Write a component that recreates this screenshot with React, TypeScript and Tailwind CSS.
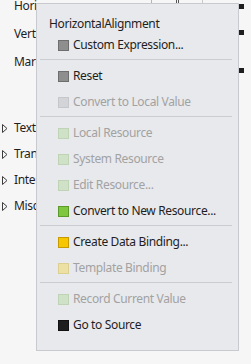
import React from "react";

type Item = {
  label: string;
  fill: string;
  border: string;
  disabled?: boolean;
};

function MenuItem({ item }: { item: Item }) {
  return (
    <div className="flex h-[26px] items-center pl-[21px]">
      <span
        className="block h-[11px] w-[11px] shrink-0 border"
        style={{ backgroundColor: item.fill, borderColor: item.border }}
      />
      <span
        className={
          "ml-[4px] whitespace-nowrap text-[12px] leading-[16px] tracking-[-0.35px] " +
          (item.disabled ? "text-[#a2a2a2]" : "text-[#1e1e1e]")
        }
      >
        {item.label}
      </span>
    </div>
  );
}

function Sep() {
  return (
    <div className="h-[5px] pt-[1px]">
      <div className="ml-[3px] mr-[6px] h-px bg-[#cbccd1]" />
    </div>
  );
}

function Tri() {
  return (
    <svg width="6" height="9" viewBox="0 0 6 9" className="shrink-0">
      <path d="M0.5 0.5 L5 4.5 L0.5 8.5 Z" fill="none" stroke="#3c3c3c" strokeWidth="1" />
    </svg>
  );
}

export default function App() {
  const gray = { fill: "#8e8e8e", border: "#6e6e6e" };
  const lgray = { fill: "#d3d4d7", border: "#c6c7ca" };
  const lgreen = { fill: "#cfe1c6", border: "#bfd3b5" };

  return (
    <div
      className="relative h-[364px] w-[251px] overflow-hidden bg-[#f6f6f6] text-[#1e1e1e]"
      style={{ fontFamily: '"Segoe UI", "Noto Sans", sans-serif' }}
    >
      {/* background property panel */}
      <div className="flex flex-col gap-[16px] pl-[14px] text-[12px] leading-[12px] tracking-[-0.35px]">
        <div className="h-[12px]">Hori</div>
        <div className="h-[12px]">Vert</div>
        <div className="h-[12px]">Marg</div>
      </div>
      <div className="mt-[47px] flex flex-col pl-[2px] text-[12px] leading-[16px] tracking-[-0.35px]">
        {["Text", "Tran", "Inter", "Misc"].map((t) => (
          <div key={t} className="flex h-[26px] items-center gap-[6px]">
            <Tri />
            <span>{t}</span>
          </div>
        ))}
      </div>

      {/* right-edge markers */}
      <div className="absolute left-[239px] top-[4px] flex flex-col">
        <div className="h-[5px] w-[5px] bg-[#1e1e1e]" />
        <div className="mt-[21px] h-[5px] w-[5px] bg-[#1e1e1e]" />
        <div className="mt-[33px] h-[5px] w-[5px] bg-[#1e1e1e]" />
      </div>
      {/* top partial control */}
      <div className="absolute left-[151px] top-0 flex h-[3px] w-[52px]">
        <div className="h-full w-px bg-[#9fb8d6]" />
        <div className="ml-[24px] h-full w-px bg-[#555]" />
        <div className="ml-[1px] h-full w-px bg-[#555]" />
        <div className="ml-[23px] h-full w-px bg-[#c8c8c8]" />
      </div>

      {/* context menu */}
      <div className="absolute left-[36px] top-[3px] h-[348px] w-[203px] border border-[#c9cad0] bg-[#e8e9ed]">
        <div className="pl-[12px] pt-[12px] text-[12px] leading-[16px] tracking-[-0.35px] text-[#1e1e1e]">
          HorizontalAlignment
        </div>
        <div>
          <MenuItem item={{ label: "Custom Expression...", ...gray }} />
          <Sep />
          <MenuItem item={{ label: "Reset", ...gray }} />
          <MenuItem item={{ label: "Convert to Local Value", ...lgray, disabled: true }} />
          <Sep />
          <MenuItem item={{ label: "Local Resource", ...lgreen, disabled: true }} />
          <MenuItem item={{ label: "System Resource", ...lgreen, disabled: true }} />
          <MenuItem item={{ label: "Edit Resource...", ...lgreen, disabled: true }} />
          <MenuItem item={{ label: "Convert to New Resource...", fill: "#7ec73e", border: "#5c9a2c" }} />
          <Sep />
          <MenuItem item={{ label: "Create Data Binding...", fill: "#f6c600", border: "#c79b00" }} />
          <MenuItem item={{ label: "Template Binding", fill: "#ede0a3", border: "#dccf92", disabled: true }} />
          <Sep />
          <MenuItem item={{ label: "Record Current Value", ...lgreen, disabled: true }} />
          <MenuItem item={{ label: "Go to Source", fill: "#1e1e1e", border: "#111111" }} />
        </div>
      </div>
    </div>
  );
}
